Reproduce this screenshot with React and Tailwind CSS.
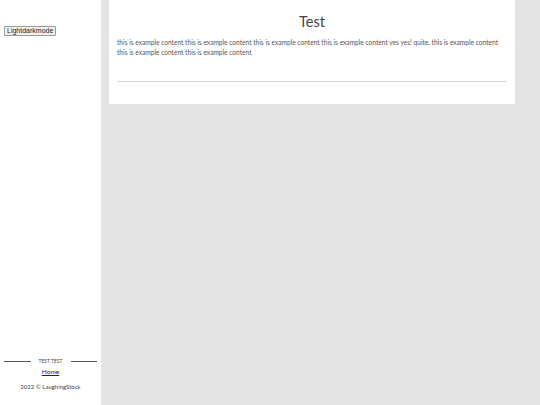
export default function App() {
  return (
    <div className="flex w-[540px] h-[405px] overflow-hidden bg-[#e3e3e3]" style={{ fontFamily: "Lato, sans-serif" }}>
      <aside className="w-[101px] h-full bg-white flex flex-col justify-between">
        <div className="pt-[26px] pl-[4px] flex">
          <button className="h-[10px] px-[2px] border border-[#999] rounded-[1px] bg-[#f0f0f0] text-[7px] leading-[8px] text-[#222]" style={{ fontFamily: "'Liberation Sans', Arial, sans-serif" }}>
            Lightdarkmode
          </button>
        </div>
        <div className="pb-[15px] flex flex-col items-center">
          <div className="flex items-center w-full px-[4px] gap-[8px]">
            <div className="flex-1 h-px bg-[#555]"></div>
            <span className="text-[5px] text-[#444] leading-[6px]">TEST TEST</span>
            <div className="flex-1 h-px bg-[#555]"></div>
          </div>
          <a href="#" className="mt-[4px] text-[6.5px] leading-[8px] text-[#2200cc] underline">Home</a>
          <p className="mt-[7px] text-[6px] leading-[7px] text-[#444]">2022 © LaughingStock</p>
        </div>
      </aside>
      <main className="flex-1 pl-[8px] pr-[25px]">
        <div className="bg-white h-[104px] px-[8px] pt-[13px]">
          <h1 className="text-center text-[14.5px] leading-[18px] text-[#444]">Test</h1>
          <p className="mt-[6px] text-[6.6px] leading-[10px] text-[#555]">
            this is example content this is example content this is example content this is example content yes yes! quite. this is example content this is example content this is example content
          </p>
          <hr className="mt-[24px] border-0 h-px bg-[#d5d5d5]" />
        </div>
      </main>
    </div>
  );
}
